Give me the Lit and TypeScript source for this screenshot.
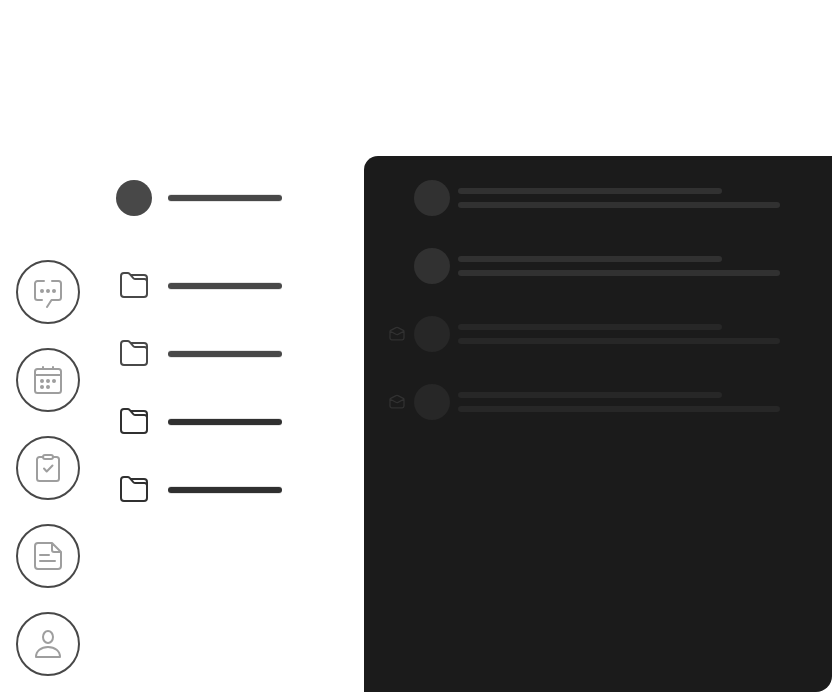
import { LitElement, html, svg, css } from "lit";
import { customElement } from "lit/decorators.js";
import { classMap } from "lit/directives/class-map.js";

const icons = [
  svg`<path d="M12 5H5.500A2.500 2.500 0 0 0 3 7.500v14A2.500 2.500 0 0 0 5.500 24H10M20 5h6.500A2.500 2.500 0 0 1 29 7.500v14a2.500 2.500 0 0 1-2.500 2.500H19.500L15 31"/>
    <g class="dots"><circle cx="10" cy="15" r="2"/><circle cx="16" cy="15" r="2"/><circle cx="22" cy="15" r="2"/></g>`,
  svg`<rect x="3" y="5" width="26" height="24" rx="2.500"/><path d="M3 11h26M11 3v2M21 3v2"/>
    <g class="dots"><circle cx="10" cy="17" r="2"/><circle cx="16" cy="17" r="2"/><circle cx="22" cy="17" r="2"/><circle cx="10" cy="23" r="2"/><circle cx="16" cy="23" r="2"/></g>`,
  svg`<path d="M11 5H7.500A2.500 2.500 0 0 0 5 7.500v19A2.500 2.500 0 0 0 7.500 29h17a2.500 2.500 0 0 0 2.500-2.500v-19A2.500 2.500 0 0 0 24.500 5H21"/><rect x="11" y="3" width="10" height="4" rx="2"/><path d="M12 16.500l2.700 3L20.500 13.500"/>`,
  svg`<path d="M20 3H6a3 3 0 0 0-3 3v20a3 3 0 0 0 3 3h20a3 3 0 0 0 3-3V12L20 3v7a2 2 0 0 0 2 2h7M8 15h9M8 21h15"/>`,
  svg`<ellipse cx="16" cy="9" rx="5" ry="6"/><path d="M4 29c0-6 5-10 12-10s12 4 12 10Z"/>`,
];

@customElement("app-root")
export class AppRoot extends LitElement {
  static styles = css`
    :host { display: block; }
    .page { box-sizing: border-box; width: 832px; height: 692px; padding-top: 156px; display: flex; background: #fff; overflow: hidden; }
    svg { display: block; fill: none; stroke-linejoin: round; stroke-linecap: round; }
    .rail { display: flex; flex-direction: column; gap: 24px; width: 64px; padding: 104px 0 0 16px; flex: none; }
    .button { box-sizing: border-box; width: 64px; height: 64px; flex: none; border: 2px solid #484848; border-radius: 50%; display: grid; place-items: center; }
    .button svg { stroke: #9e9e9e; stroke-width: 2; }
    .dots { fill: #9e9e9e; stroke: none; }
    .folders { width: 284px; flex: none; box-sizing: border-box; padding: 24px 0 0 36px; color: #484848; }
    .row { display: flex; align-items: center; height: 36px; margin-bottom: 32px; }
    .row.account { margin-bottom: 52px; }
    .row.strong { color: #303030; }
    .lead { width: 36px; margin-right: 16px; display: grid; justify-items: center; }
    .lead svg { stroke: currentColor; stroke-width: 2; margin-top: -2px; }
    .avatar { width: 36px; height: 36px; border-radius: 50%; background: currentColor; flex: none; }
    .bar { height: 6px; border-radius: 3px; background: currentColor; }
    .folders .bar { width: 114px; box-shadow: 0 1px 0 #0000001a, 0 -1px 0 #0000001a; }
    .panel { flex: 1; box-sizing: border-box; background: #1b1b1b; border-radius: 14px 0 16px 0; padding: 24px 0 0 24px; }
    .message { display: flex; align-items: center; height: 36px; margin-bottom: 32px; color: #313131; }
    .message.read { color: #272727; }
    .mark { width: 18px; margin-right: 8px; }
    .mark svg { stroke: #313131; stroke-width: 1.3; }
    .lines { display: grid; gap: 8px; margin-left: 8px; }
    .short { width: 264px; }
    .long { width: 322px; }
  `;

  folder(strong: boolean) {
    return html`<div class=${classMap({ row: true, strong })}>
      <div class="lead"><svg width="28" height="26" viewBox="0 0 28 26"><path d="M7.500 1H4A3 3 0 0 0 1 4v18a3 3 0 0 0 3 3h20a3 3 0 0 0 3-3V9.500A2.500 2.500 0 0 0 24.500 7H15.500a3 3 0 0 1-2.200-.9L9.600 1.900A2.800 2.800 0 0 0 7.500 1ZM11 3h13a3 3 0 0 1 3 3v4"/></svg></div>
      <div class="bar"></div>
    </div>`;
  }

  message(read: boolean) {
    return html`<div class=${classMap({ message: true, read })}>
      <div class="mark">${read ? html`<svg width="18" height="16" viewBox="0 0 18 16"><path d="M2 5.500Q2 4.800 2.700 4.400L8 1.600a2.200 2.200 0 0 1 2 0l5.300 2.800q.7.4.7 1.100V12a1.800 1.800 0 0 1-1.800 1.800H3.800A1.800 1.800 0 0 1 2 12ZM2.200 5.200 8 8.300a2.200 2.200 0 0 0 2 0l5.800-3.100"/></svg>` : ""}</div>
      <div class="avatar"></div>
      <div class="lines"><div class="bar short"></div><div class="bar long"></div></div>
    </div>`;
  }

  render() {
    return html`<div class="page">
      <nav class="rail">${icons.map((icon) => html`<div class="button"><svg width="32" height="32" viewBox="0 0 32 32">${icon}</svg></div>`)}</nav>
      <div class="folders">
        <div class="row account"><div class="lead"><div class="avatar"></div></div><div class="bar"></div></div>
        ${[false, false, true, true].map((s) => this.folder(s))}
      </div>
      <main class="panel">${[false, false, true, true].map((r) => this.message(r))}</main>
    </div>`;
  }
}
